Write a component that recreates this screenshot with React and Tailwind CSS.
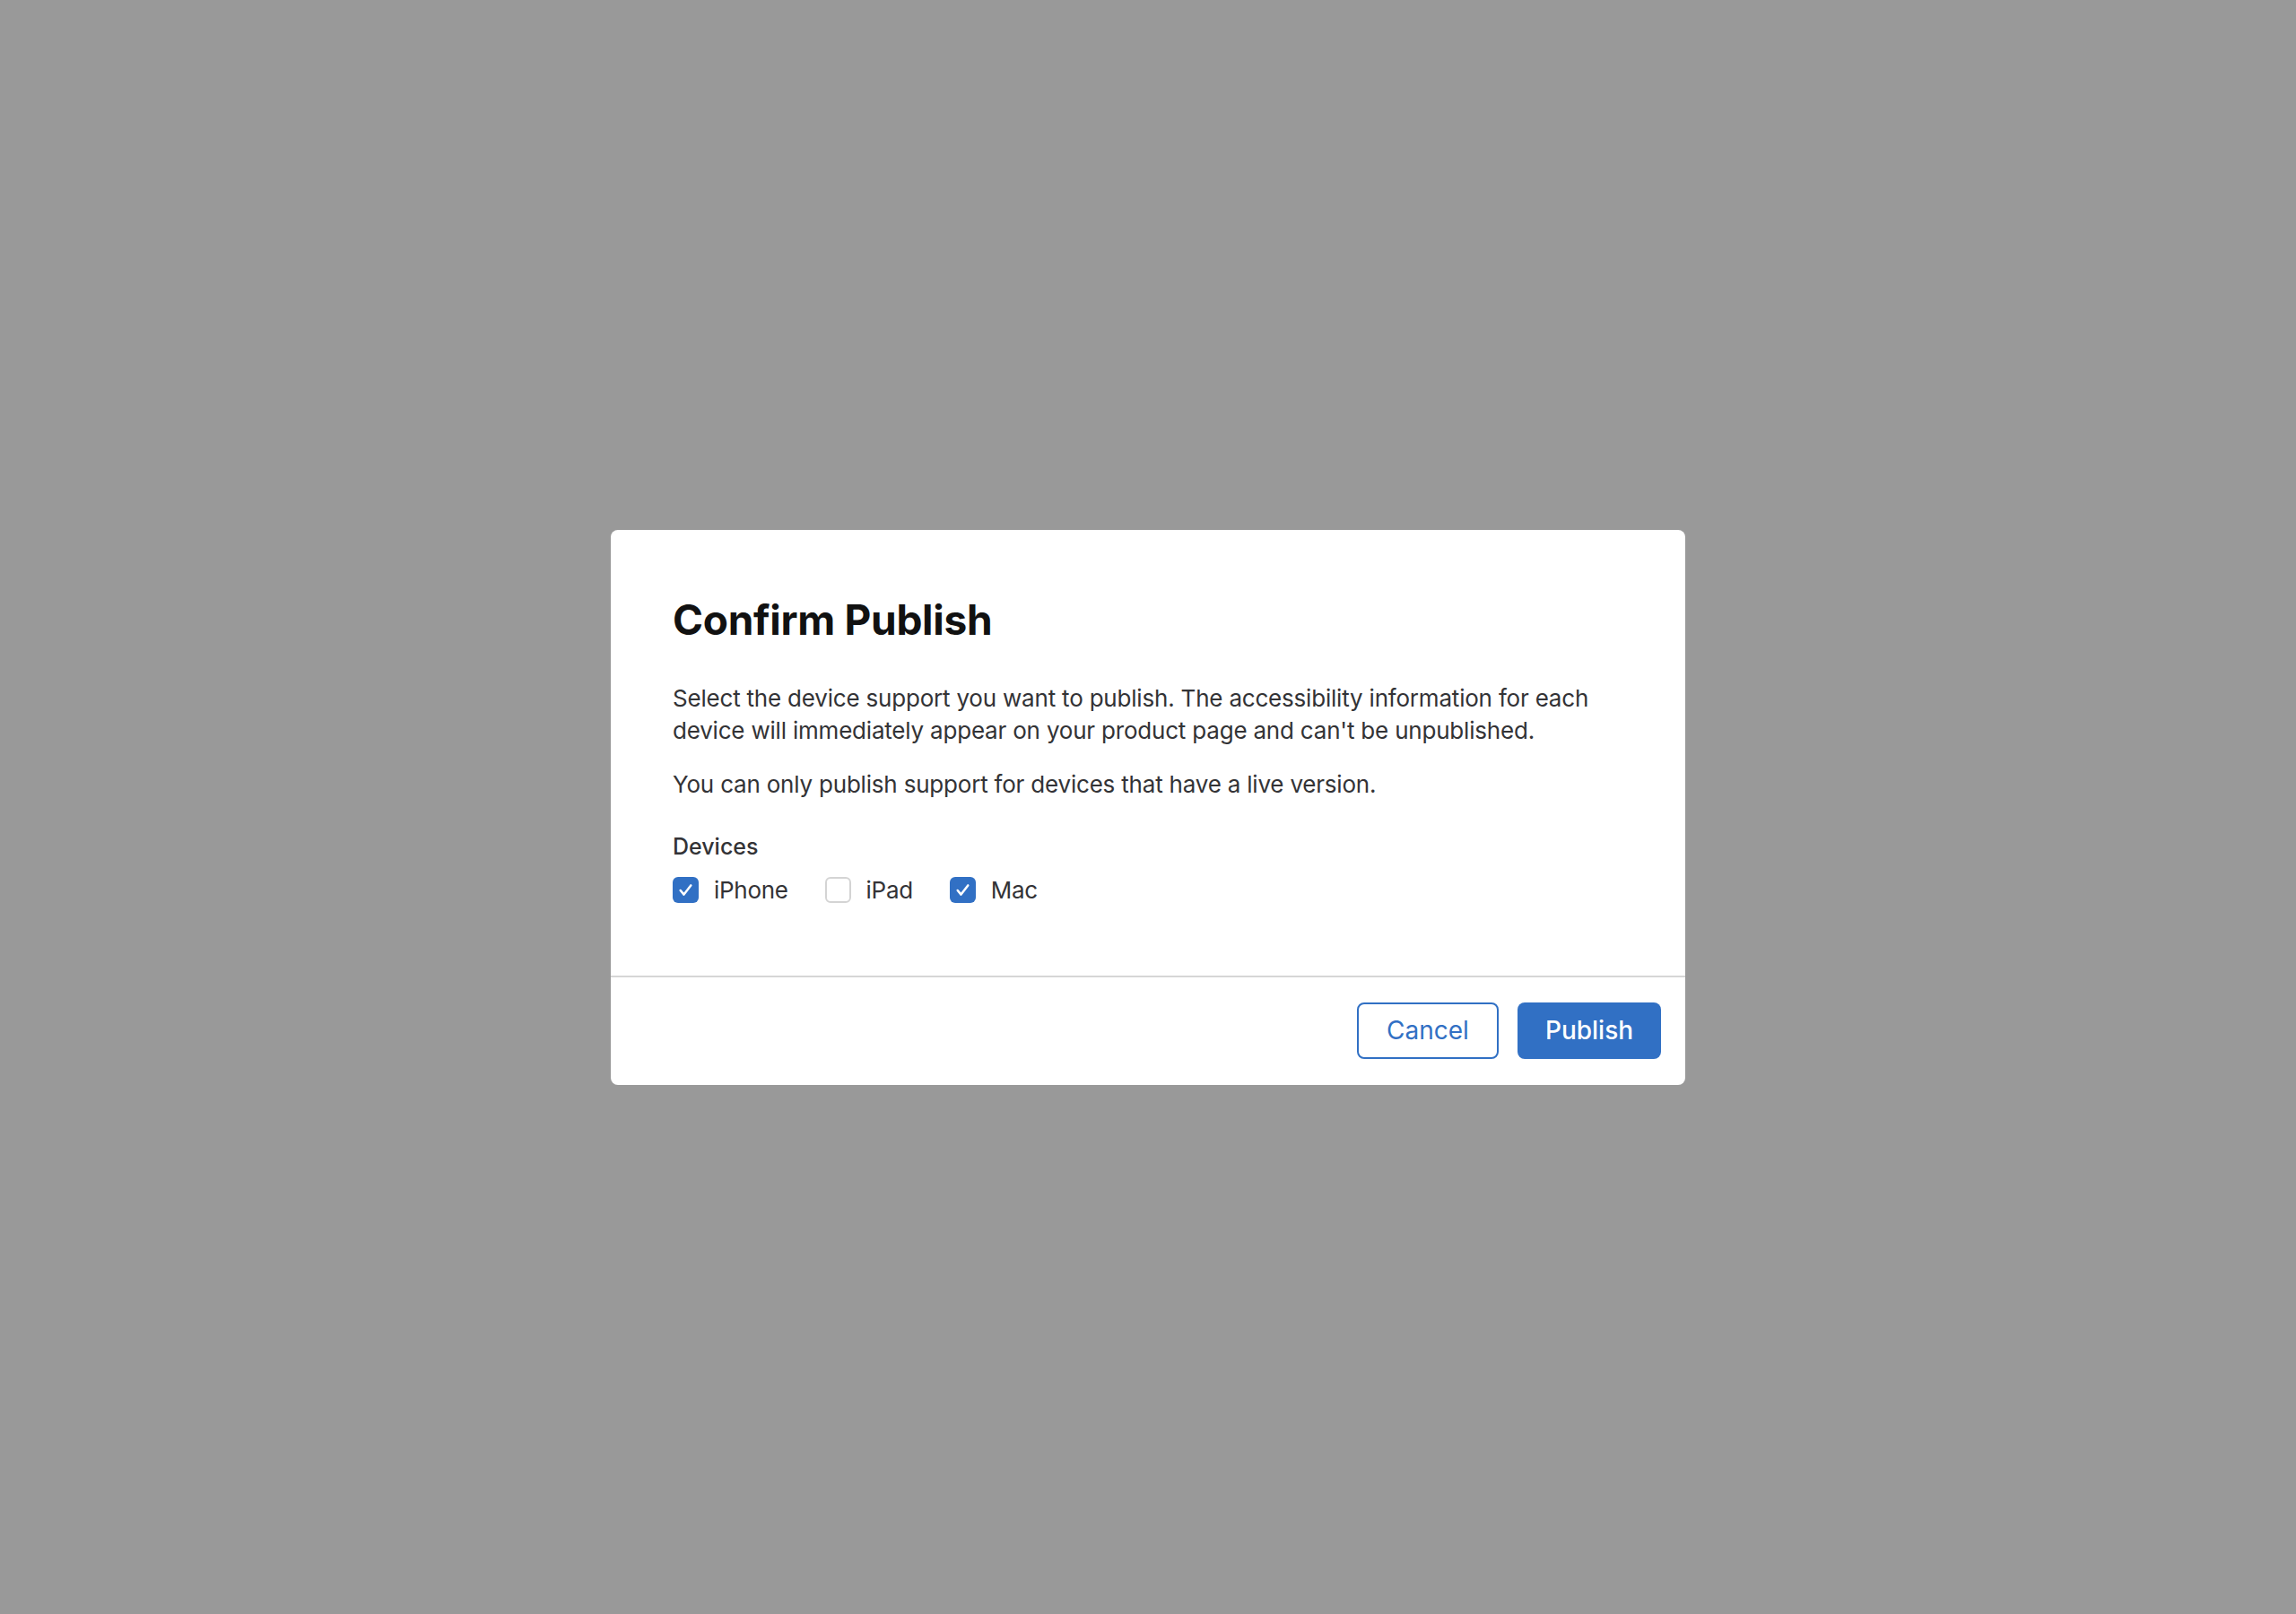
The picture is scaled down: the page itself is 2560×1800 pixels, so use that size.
import React, { useState } from 'react';

const font = { fontFamily: 'Inter, "Noto Sans", sans-serif' };

const Checkbox = ({ checked, label, onToggle }) => (
  <label className="flex items-center gap-[17px] cursor-pointer select-none" onClick={onToggle}>
    {checked ? (
      <span className="flex items-center justify-center w-[29px] h-[29px] rounded-[6px] bg-[#3170c4]">
        <svg width="21" height="21" viewBox="0 0 16 16" fill="none">
          <path d="M3.6 8.4 L6.5 11.9 L12.4 4.1" stroke="white" strokeWidth="1.9" strokeLinecap="round" strokeLinejoin="round" />
        </svg>
      </span>
    ) : (
      <span className="w-[29px] h-[29px] rounded-[6px] border-2 border-[#d4d4d4] bg-white" />
    )}
    <span className="text-[26px] leading-[36px] tracking-[-0.3px] text-[#333336]">{label}</span>
  </label>
);

export default function App() {
  const [devices, setDevices] = useState({ iPhone: true, iPad: false, Mac: true });

  const toggle = (name) => setDevices((prev) => ({ ...prev, [name]: !prev[name] }));

  return (
    <div className="w-full h-[1800px] bg-[#999999] flex items-center justify-center" style={font}>
      <div className="w-[1198px] bg-white rounded-[8px] flex flex-col">
        {/* Body */}
        <div className="px-[69px] pt-[72px] pb-[77px]">
          <h1 className="text-[46px] leading-[56px] font-bold text-[#111111] tracking-[-0.3px]">Confirm Publish</h1>
          <p className="mt-[42px] text-[26px] leading-[36px] tracking-[-0.2px] text-[#333336]">
            Select the device support you want to publish. The accessibility information for each device will immediately appear on your product page and can't be unpublished.
          </p>
          <p className="mt-[24px] text-[26px] leading-[36px] tracking-[-0.2px] text-[#333336]">
            You can only publish support for devices that have a live version.
          </p>
          <div className="mt-[33px] text-[25px] leading-[36px] font-medium text-[#333336]">Devices</div>
          <div className="mt-[13px] flex items-center gap-[41px]">
            {['iPhone', 'iPad', 'Mac'].map((d) => (
              <Checkbox key={d} label={d} checked={devices[d]} onToggle={() => toggle(d)} />
            ))}
          </div>
        </div>

        {/* Footer */}
        <div className="border-t-2 border-[#d6d6d6] flex justify-end gap-[21px] pt-[28px] pb-[29px] pr-[27px]">
          <button className="w-[158px] h-[63px] rounded-[8px] border-2 border-[#3170c4] bg-white text-[#3170c4] text-[28px]">
            Cancel
          </button>
          <button className="w-[160px] h-[63px] rounded-[8px] bg-[#3170c4] text-white text-[28px] font-medium">
            Publish
          </button>
        </div>
      </div>
    </div>
  );
}
